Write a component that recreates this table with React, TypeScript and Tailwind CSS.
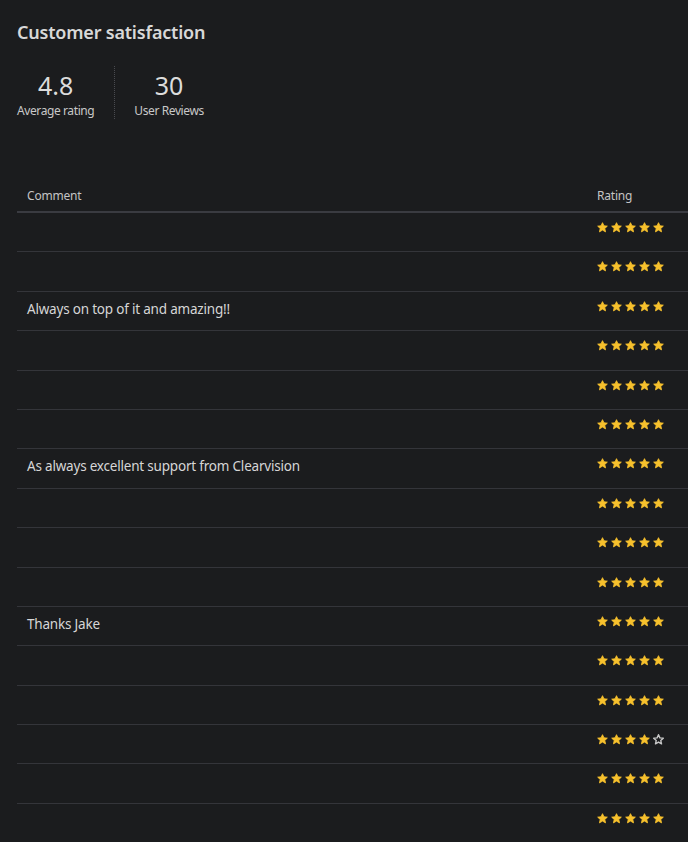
import React from "react";

const Star = ({ filled }: { filled: boolean }) => (
  <svg width="11" height="11" viewBox="0 0 24 24" className="block">
    <path
      d="M12 1.5l3.1 6.9 7.4.7-5.6 5 1.7 7.4L12 17.6l-6.6 3.9 1.7-7.4-5.6-5 7.4-.7z"
      fill={filled ? "#f7c12d" : "none"}
      stroke={filled ? "#f7c12d" : "#c8c8c8"}
      strokeWidth={filled ? 2 : 3}
      strokeLinejoin="round"
    />
  </svg>
);

const rows: { c: string; r: number }[] = [
  { c: "", r: 5 },
  { c: "", r: 5 },
  { c: "Always on top of it and amazing!!", r: 5 },
  { c: "", r: 5 },
  { c: "", r: 5 },
  { c: "", r: 5 },
  { c: "As always excellent support from Clearvision", r: 5 },
  { c: "", r: 5 },
  { c: "", r: 5 },
  { c: "", r: 5 },
  { c: "Thanks Jake", r: 5 },
  { c: "", r: 5 },
  { c: "", r: 5 },
  { c: "", r: 4 },
  { c: "", r: 5 },
  { c: "", r: 5 },
];

export default function App() {
  return (
    <div
      className="w-[688px] h-[842px] overflow-hidden bg-[#1b1c1e] text-[#d4d4d4]"
      style={{ fontFamily: '"Noto Sans", "Open Sans", sans-serif' }}
    >
      <div className="pl-[17px] pt-[20px]">
        <h1 className="text-[18px] leading-[24px] font-semibold text-[#d8d8d8] tracking-[-0.2px]">
          Customer satisfaction
        </h1>
        <div className="flex mt-[22px] h-[53px]">
          <div className="flex flex-col items-center pt-[3px] pr-[20px] border-r border-dotted border-[#4a4b50]">
            <div className="text-[25px] leading-[32px] text-[#dcdcdc]">4.8</div>
            <div className="mt-[2px] text-[12px] leading-[16px] text-[#c8c8c8] tracking-[-0.4px]">Average rating</div>
          </div>
          <div className="flex flex-col items-center pt-[3px] pl-[19px]">
            <div className="text-[25px] leading-[32px] text-[#dcdcdc]">30</div>
            <div className="mt-[2px] text-[12px] leading-[16px] text-[#c8c8c8] tracking-[-0.4px]">User Reviews</div>
          </div>
        </div>
      </div>
      <div className="ml-[17px] mt-[59px]">
        <div className="flex h-[35px] items-center border-b-2 border-[#3a3b41] text-[12px] text-[#c4c4c4]">
          <div className="flex-1 pl-[10px] pt-[2px] tracking-[-0.2px]">Comment</div>
          <div className="w-[91px] pt-[2px] tracking-[-0.2px]">Rating</div>
        </div>
        {rows.map((row, i) => (
          <div
            key={i}
            className="flex h-[39.4px] border-b border-[#34353a] text-[13.5px] text-[#d6d6d6]"
          >
            <div className="flex-1 pl-[10px] pt-[8px] leading-[19px] tracking-[-0.2px]">{row.c}</div>
            <div className="w-[91px] pt-[9px] flex gap-[3px]">
              {[0, 1, 2, 3, 4].map((k) => (
                <Star key={k} filled={k < row.r} />
              ))}
            </div>
          </div>
        ))}
      </div>
    </div>
  );
}
